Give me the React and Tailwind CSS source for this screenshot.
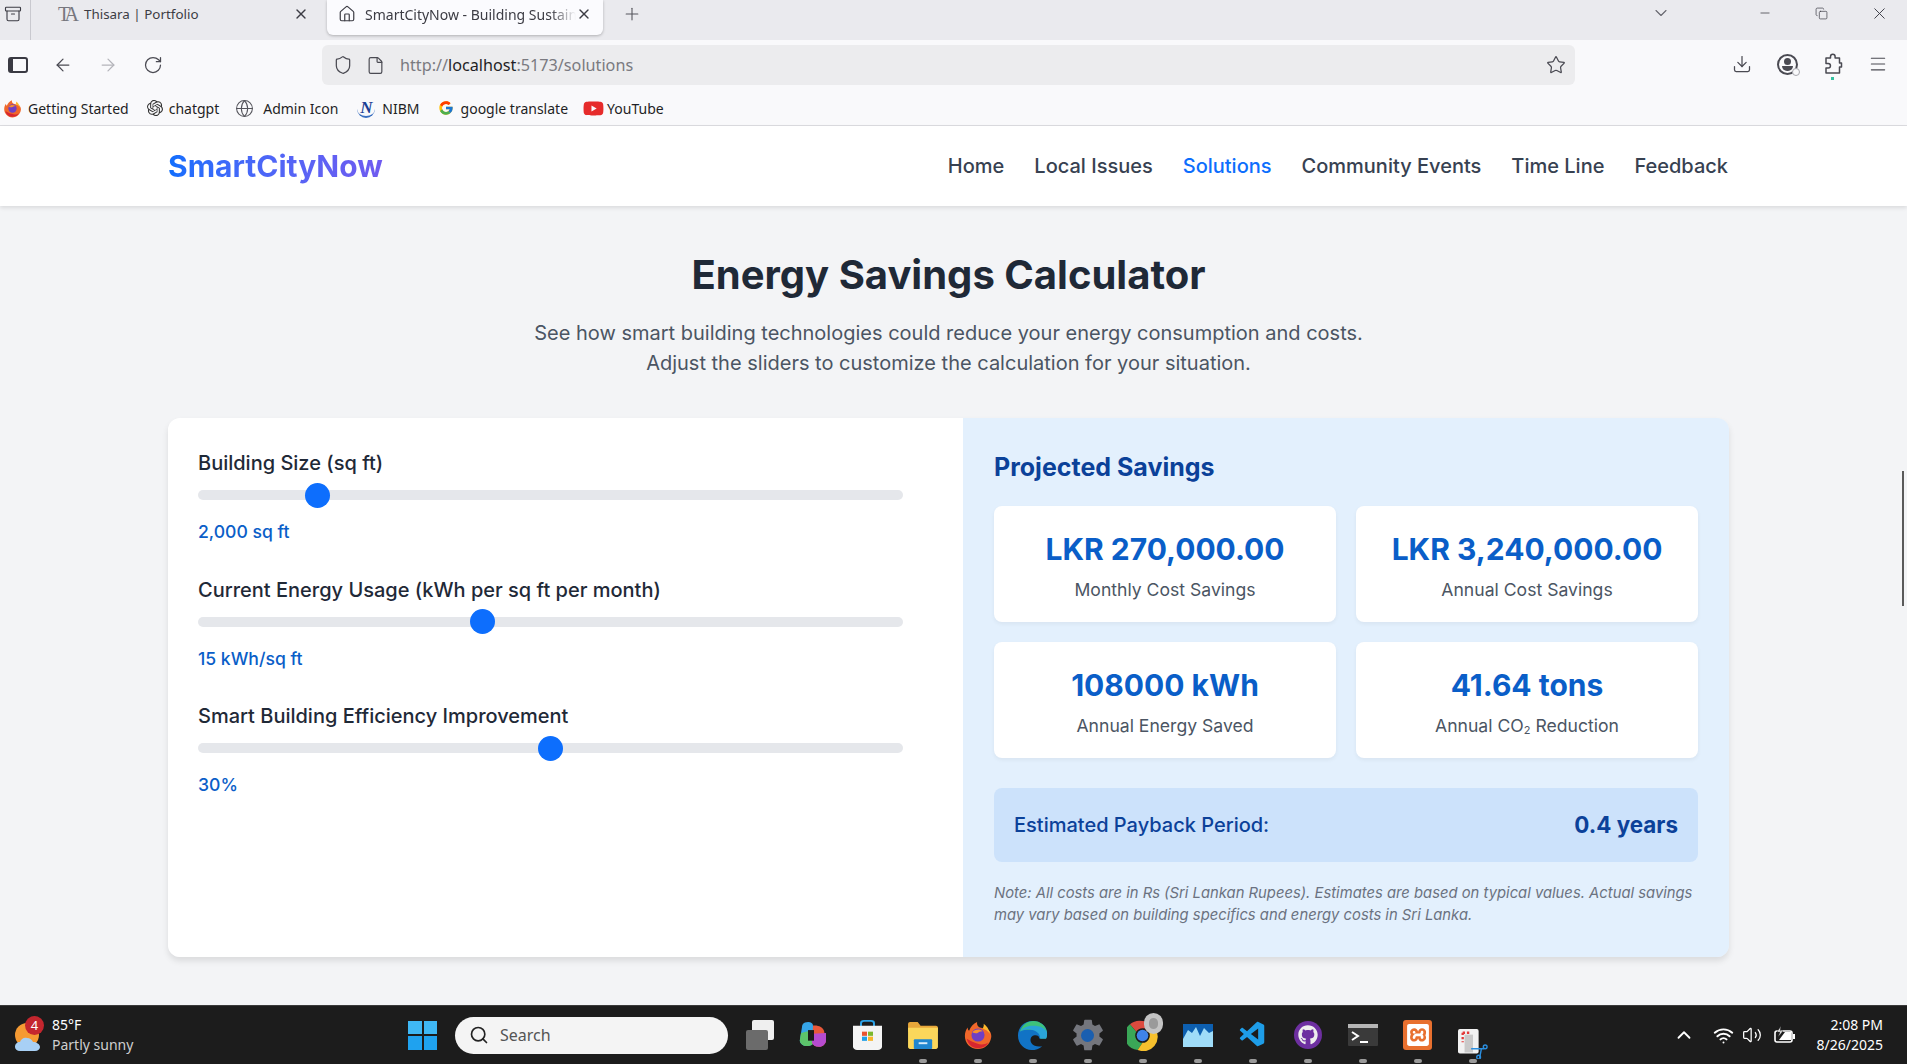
import {
  Archive, ArrowLeft, ArrowRight, ChevronDown, ChevronUp, Copy, Download, File, Globe, House, Menu, Minus, Plus,
  RotateCw, Search, Shield, Star, Volume2, Wifi, X,
} from "lucide-react";
import { FcGoogle } from "react-icons/fc";
import { FaGithub, FaYoutube } from "react-icons/fa";
import { IoSettingsSharp } from "react-icons/io5";
import { SiOpenai, SiXampp } from "react-icons/si";
import { VscVscode } from "react-icons/vsc";

const navLinks = ["Home", "Local Issues", "Solutions", "Community Events", "Time Line", "Feedback"];

const sliders = [
  { label: "Building Size (sq ft)", min: 500, max: 10000, value: 2000, text: "2,000 sq ft" },
  { label: "Current Energy Usage (kWh per sq ft per month)", min: 5, max: 30, value: 15, text: "15 kWh/sq ft" },
  { label: "Smart Building Efficiency Improvement", min: 10, max: 50, value: 30, text: "30%" },
];

function FirefoxIcon({ size = 20 }) {
  return (
    <svg width={size} height={size} viewBox="0 0 32 32">
      <path d="M16 31C7.500 31 2 24.500 2 17c0-4 1.500-7 3-9 0 2 .7 3 1.500 3.500C8 7 11 4 15 2c-.5 3 1 5 3 6 5 1 9 2 10.500 4 1.500 2 2 5 1.500 7-1 7-7 12-14 12z" fill="#f0672a" />
      <path d="M22 4c3 2 6 6 7 11-2-3-5-5-8-6 1-2 1.500-3 1-5z" fill="#fdb82c" />
      <path d="M4 20c1 6 6 10 12 10 5 0 9-2 11-6-3 2-8 3-12 1-4-1-7-3-11-5z" fill="#d8262f" />
      <circle cx="16" cy="16" r="7" fill="#6f3fc4" />
      <path d="M10 13c2-3 8-4 11-1-3 0-4 1-6 2-2 0-4 0-5-1z" fill="#f7912e" />
    </svg>
  );
}

function ChromeIcon() {
  return (
    <span className="relative flex">
      <svg width="31" height="31" viewBox="0 0 32 32">
        <path d="M16 1a15 15 0 0 1 13 7.500H16a7.500 7.500 0 0 0-6.500 3.750L3 4.500A15 15 0 0 1 16 1z" fill="#dd4b3e" />
        <path d="M3 4.500l6.500 7.750A7.500 7.500 0 0 0 16 23.500L11 31A15 15 0 0 1 3 4.500z" fill="#3aa757" />
        <path d="M29 8.500A15 15 0 0 1 11 31l5-7.500a7.500 7.500 0 0 0 6.500-11.250z" fill="#f6c02d" />
        <circle cx="16" cy="16" r="6" fill="#3f83ea" />
      </svg>
      <span className="absolute -top-[7px] right-[-5px] w-[19px] h-[21px] rounded-full bg-[#9a9a9a] border-[5px] border-[#c4c4c4]" />
    </span>
  );
}

function EdgeIcon() {
  return (
    <svg width="31" height="31" viewBox="0 0 32 32">
      <path d="M16 1C7 1 1 8 1 16c0 9 7 15 14 15 4 0 8-1 11-4-4 1-9 0-11-3-2-3-1-7 2-8 3-1 6 0 6 3h7c1-2 1-4 1-6C31 6 24 1 16 1z" fill="#1173c5" />
      <path d="M3 12C5 5 11 1 17 1c7 0 13 5 14 12 0 2 0 4-1 6h-6c1-5-3-9-9-9-5 0-10 0-12 2z" fill="#3ec27a" />
      <path d="M3 12c3-2 7-3 12-2 5 1 9 4 9 9h6c1-2 1-4 1-6-2-5-8-7-14-7-6 0-11 2-14 6z" fill="#2aa4d8" />
    </svg>
  );
}

function CopilotIcon() {
  return (
    <svg width="29" height="28" viewBox="0 0 29 37" preserveAspectRatio="none">
      <path d="M7 2c4-2 8 0 8 4l2 18c0 5-3 9-8 9-5 0-8-5-7-9L4 8c0-3 1-5 3-6z" fill="#35a5e8" />
      <path d="M3 16l12-4 2 12c0 5-3 9-8 9-5 0-8-5-7-9z" fill="#5cc36a" />
      <path d="M15 6c5-1 10 2 11 7l2 12c0 5-3 9-7 9-4 0-6-2-7-6z" fill="#e8583a" />
      <path d="M14 17l14-1 0 9c0 5-3 9-7 9-4 0-6-2-7-6z" fill="#b64bd0" />
      <path d="M10 12l6 0 0 14-6 0z" fill="#1b1b1b" />
    </svg>
  );
}

function StoreIcon() {
  return (
    <svg width="29" height="30" viewBox="0 0 29 36" preserveAspectRatio="none">
      <path d="M8 9V4c0-2 1-3 3-3h7c2 0 3 1 3 3v5" fill="none" stroke="#2ca3e8" strokeWidth="2" />
      <path d="M0 7h29v25c0 2-2 4-4 4H4c-2 0-4-2-4-4z" fill="#f4f4f4" />
      <rect x="9" y="14" width="5" height="5" fill="#e8532f" />
      <rect x="15" y="14" width="5" height="5" fill="#7cb82c" />
      <rect x="9" y="20" width="5" height="5" fill="#1d9fe8" />
      <rect x="15" y="20" width="5" height="5" fill="#f7b52a" />
    </svg>
  );
}

function FolderIcon() {
  return (
    <svg width="30" height="27" viewBox="0 0 31 28">
      <path d="M0 2c0-1 1-2 2-2h8l3 4h16c1 0 2 1 2 2v4H0z" fill="#e8a73a" />
      <path d="M0 6h31v20c0 1-1 2-2 2H2c-1 0-2-1-2-2z" fill="#fbd75b" />
      <rect x="6" y="18" width="19" height="10" rx="1" fill="#1f86d0" />
      <rect x="11" y="21" width="9" height="2" fill="#d8edfb" />
    </svg>
  );
}

function TaskManagerIcon() {
  return (
    <svg width="30" height="23" viewBox="0 0 30 23">
      <rect width="30" height="23" fill="#0d5fb0" />
      <path d="M0 15l5-9 4 3 4-6 4 9 4-8 5 5 4-2v16H0z" fill="#9fdcf8" />
    </svg>
  );
}

function TerminalIcon() {
  return (
    <svg width="30" height="22" viewBox="0 0 30 22">
      <rect width="30" height="22" rx="1" fill="#3a3a3a" />
      <rect width="30" height="4" fill="#b5b5b5" />
      <path d="M4 8l6 4-6 4" fill="none" stroke="#fff" strokeWidth="2" />
      <path d="M12 18h8" stroke="#fff" strokeWidth="2" />
    </svg>
  );
}

function SnipIcon() {
  return (
    <svg width="30" height="30" viewBox="0 0 32 32">
      <rect x="0" y="0" width="22" height="26" rx="2" fill="#f2f2f2" />
      <path d="M5 4h9M5 4v10" stroke="#e33b3b" strokeWidth="2.500" strokeDasharray="2.500 2" />
      <rect x="7" y="6" width="9" height="19" fill="#c9c9c9" />
      <path d="M14 21h14M25 21l-2 10" stroke="#2b8fe0" strokeWidth="1.500" fill="none" />
      <circle cx="29" cy="19" r="2" fill="none" stroke="#2b8fe0" strokeWidth="1.500" />
      <circle cx="22" cy="30" r="2" fill="none" stroke="#2b8fe0" strokeWidth="1.500" />
    </svg>
  );
}

function PuzzleIcon() {
  return (
    <svg width="20" height="22" viewBox="0 0 20 22" fill="none" stroke="currentColor" strokeWidth="1.500" strokeLinejoin="round">
      <path d="M3 5h4.500V3.500a2.300 2.300 0 0 1 4.600 0V5H16.500v5H18.500v4H16.500v6H3v-5h2.200a2 2 0 0 0 0-4.500H3z" />
    </svg>
  );
}

function ProfileIcon() {
  return (
    <span className="relative w-[21px] h-[21px] rounded-full border-2 border-[#4a4a52] flex flex-col items-center pt-[2px]">
      <span className="w-[7px] h-[7px] rounded-full bg-[#4a4a52]" />
      <span className="w-[11px] h-[5px] mt-[1px] rounded-b-full bg-[#4a4a52]" />
      <span className="absolute -bottom-[3px] -right-[4px] w-[8px] h-[8px] rounded-full bg-[#f9f9fb] border border-[#a8a8ae]" />
    </span>
  );
}

function WeatherIcon() {
  return (
    <div className="relative w-[30px] h-[36px] shrink-0">
      <svg width="30" height="36" viewBox="0 0 30 36" className="mt-[2px]">
        <circle cx="13" cy="16" r="12" fill="#f59a33" />
        <path d="M6 32c-3 0-5-2-5-4 0-3 2-5 5-5 1-3 4-5 7-4 3 0 5 2 6 4 3 0 7 2 7 5 0 2-2 4-5 4z" fill="#a8d0f5" />
      </svg>
      <span className="absolute -top-[1px] left-[11px] w-[19px] h-[19px] rounded-full bg-[#c4262e] text-white text-[13px] leading-[19px] text-center">4</span>
    </div>
  );
}

function Bookmark({ icon, label, className }) {
  return (
    <div className={`flex items-center ${className}`}>
      {icon}
      <span className="text-[14px] text-[#1f1f25] whitespace-nowrap">{label}</span>
    </div>
  );
}

function BrowserChrome() {
  return (
    <div className="font-['Noto_Sans',sans-serif] shrink-0">
      <div className="h-10 bg-[#eaeaee] flex items-start text-[#3c3c44]">
        <div className="w-[31px] h-10 border-r border-[#c9c9cf] flex justify-center pt-[5px] pr-[5px]">
          <Archive size={18} strokeWidth={1.500} />
        </div>
        <div className="w-[265px] ml-[20px] h-[35px] flex items-center pb-[7px] pl-[7px] pr-[7px]">
          <span className="text-[20px] text-[#77777e] font-['Liberation_Serif',serif] w-[26px] tracking-[-4px]">TA</span>
          <span className="text-[13.400px] flex-1">Thisara | Portfolio</span>
          <X size={16} />
        </div>
        <div className="w-[276px] ml-[11px] h-[35px] bg-[#fbfbfe] rounded-b-[6px] shadow-[0_1px_3px_rgba(0,0,0,0.25)] flex items-center pb-[7px] pl-[11px] pr-[11px]">
          <House size={18} strokeWidth={1.600} className="mr-[9px] shrink-0" />
          <span className="text-[14px] flex-1 overflow-hidden whitespace-nowrap [mask-image:linear-gradient(to_right,black_88%,transparent)]">SmartCityNow - Building Sustain</span>
          <X size={16} className="shrink-0" />
        </div>
        <Plus size={20} strokeWidth={1.300} className="ml-[19px] mt-[4px] text-[#55555c]" />
        <div className="flex-1" />
        <ChevronDown size={20} strokeWidth={1.300} className="mt-[3px] text-[#66666e] mr-[87px]" />
        <Minus size={14} strokeWidth={1.300} className="mt-[6px] mr-[43px]" />
        <Copy size={13} strokeWidth={1.300} className="mt-[7px] mr-[42px]" />
        <X size={19} strokeWidth={1.200} className="mt-[4px] mr-[18px]" />
      </div>
      <div className="h-[45px] bg-[#f9f9fb] flex items-start pt-[5px] text-[#4a4a52]">
        <div className="w-[322px] h-10 flex items-center shrink-0">
          <div className="w-[20px] h-[16px] ml-[8px] border-2 border-[#3a3a42] rounded-[3px] border-l-[5px]" />
          <ArrowLeft size={20} strokeWidth={1.500} className="ml-[25px]" />
          <ArrowRight size={20} strokeWidth={1.500} className="ml-[25px] text-[#b4b4ba]" />
          <RotateCw size={20} strokeWidth={1.500} className="ml-[25px]" />
        </div>
        <div className="w-[1253px] h-10 bg-[#ececee] rounded-[6px] flex items-center pl-[11px] pr-[9px] shrink-0">
          <Shield size={20} strokeWidth={1.500} />
          <File size={19} strokeWidth={1.500} className="ml-[13px]" />
          <span className="ml-[15px] mt-[1px] text-[16.200px] text-[#7a7a80] flex-1">
            http://<span className="text-[#1f1f25]">localhost</span>:5173/solutions
          </span>
          <Star size={20} strokeWidth={1.500} />
        </div>
        <div className="flex items-center h-10">
          <Download size={20} strokeWidth={1.500} className="ml-[157px] mt-[-2px]" />
          <span className="ml-[25px] mt-[-2px]"><ProfileIcon /></span>
          <span className="relative ml-[25px] mt-[-2px]">
            <PuzzleIcon />
            <span className="absolute -bottom-[5px] left-[8px] w-[3px] h-[3px] bg-[#35c0a0]" />
          </span>
          <Menu size={20} strokeWidth={1.300} className="ml-[25px] mt-[-2px]" />
        </div>
      </div>
      <div className="h-[41px] bg-[#f9f9fb] border-b border-[#dcdce0] flex items-center pt-[6px]">
        <Bookmark className="ml-[3px]" icon={<span className="mr-[6px] flex"><FirefoxIcon size={19} /></span>} label="Getting Started" />
        <Bookmark className="ml-[18px]" icon={<SiOpenai size={16} className="mr-[6px] text-[#333]" />} label="chatgpt" />
        <Bookmark className="ml-[16px]" icon={<Globe size={19} strokeWidth={1.300} className="mr-[9px] text-[#55555c]" />} label="Admin Icon" />
        <Bookmark className="ml-[19px]" icon={<span className="w-[18px] mr-[7px] text-center text-[17px] leading-[17px] font-bold italic text-[#1c3f94] font-['Liberation_Serif',serif] border-b-2 border-[#3a6fc0] rounded-b-full">N</span>} label="NIBM" />
        <Bookmark className="ml-[18px]" icon={<FcGoogle size={16} className="mr-[7px]" />} label="google translate" />
        <Bookmark className="ml-[15px]" icon={<FaYoutube size={21} className="mr-[3px] text-[#e62b2b]" />} label="YouTube" />
      </div>
    </div>
  );
}

function SliderField({ label, min, max, value, text }) {
  return (
    <div className="mb-[30.500px]">
      <label className="block text-[20px] leading-[28px] font-medium text-[#1f2937] mb-[13px]">{label}</label>
      <input
        type="range"
        min={min}
        max={max}
        defaultValue={value}
        className="block w-full h-2.5 appearance-none rounded-[5px] bg-[#e5e7eb] [&::-webkit-slider-thumb]:appearance-none [&::-webkit-slider-thumb]:w-[25px] [&::-webkit-slider-thumb]:h-[25px] [&::-webkit-slider-thumb]:rounded-full [&::-webkit-slider-thumb]:bg-[#0d6efd]"
      />
      <div className="mt-[19px] text-[17.600px] leading-[26px] font-medium text-[#0a5ec8]">{text}</div>
    </div>
  );
}

function StatCard({ value, children }) {
  return (
    <div className="bg-white rounded-[8px] shadow-[0_2px_4px_rgba(0,0,0,0.05)] h-[116px] flex flex-col items-center justify-center">
      <div className="text-[30px] leading-[46px] font-bold text-[#0a5ec8]">{value}</div>
      <div className="text-[17.600px] leading-[26px] mt-[5px] text-[#4b5563]">{children}</div>
    </div>
  );
}

function Taskbar() {
  const apps = [
    { el: <CopilotIcon /> },
    { el: <StoreIcon /> },
    { el: <FolderIcon />, open: true },
    { el: <FirefoxIcon size={30} />, open: true },
    { el: <EdgeIcon />, open: true },
    {
      el: (
        <span className="relative flex items-center justify-center">
          <IoSettingsSharp size={34} className="text-[#74767d]" />
          <span className="absolute w-[13px] h-[13px] rounded-full bg-[#1a5fb0]" />
        </span>
      ),
      open: true,
    },
    { el: <ChromeIcon />, open: true },
    { el: <TaskManagerIcon />, open: true },
    { el: <VscVscode size={30} className="text-[#1e9de8]" />, open: true },
    { el: <span className="w-[28px] h-[28px] rounded-full bg-[#6d2fa0] flex items-center justify-center"><FaGithub size={20} className="text-[#eee]" /></span>, open: true },
    { el: <TerminalIcon />, open: true },
    { el: <span className="w-[29px] h-[30px] rounded-[3px] bg-[#e8702f] flex items-center justify-center"><SiXampp size={22} className="text-white" /></span>, open: true },
    { el: <span className="flex mt-[18px]"><SnipIcon /></span>, open: true },
  ];
  return (
    <div className="h-[59px] shrink-0 bg-[#1c1c1c] border-t border-[#3a3a3a] flex items-center font-['Noto_Sans',sans-serif] text-white">
      <div className="w-[408px] shrink-0 pl-[14px] flex items-center">
        <WeatherIcon />
        <div className="ml-[8px] text-[14px] leading-[20px]">
          <div>85°F</div>
          <div className="text-[#cfcfcf]">Partly sunny</div>
        </div>
      </div>
      <div className="w-[29px] h-[29px] grid grid-cols-2 gap-[2px] shrink-0">
        <span className="bg-[#3fb8f5]" />
        <span className="bg-[#3fb8f5]" />
        <span className="bg-[#1fa2ef]" />
        <span className="bg-[#1fa2ef]" />
      </div>
      <div className="ml-[18px] w-[273px] h-[37px] rounded-full bg-[#f4f4f4] flex items-center pl-[14px] shrink-0">
        <Search size={20} strokeWidth={2} className="text-[#222]" />
        <span className="ml-[11px] text-[16px] text-[#555]">Search</span>
      </div>
      <div className="ml-[18px] w-[28px] h-[30px] relative shrink-0">
        <span className="absolute top-[0px] right-0 w-[22px] h-[20px] rounded-[2px] bg-[#efefef]" />
        <span className="absolute bottom-[0px] left-0 w-[22px] h-[20px] rounded-[2px] bg-[#6b6b6b]" />
      </div>
      <div className="ml-[11px] flex items-center shrink-0">
        {apps.map((app, i) => (
          <div key={i} className="relative w-[55px] h-[44px] flex items-center justify-center">
            {app.el}
            {app.open && <span className="absolute bottom-[-6px] left-[24px] w-[8px] h-[4px] rounded-full bg-[#9a9a9a]" />}
          </div>
        ))}
      </div>
      <div className="flex-1" />
      <div className="flex items-center mr-[24px]">
        <ChevronUp size={22} strokeWidth={2} />
        <Wifi size={21} strokeWidth={2.200} className="ml-[18px]" />
        <Volume2 size={20} strokeWidth={1.500} className="ml-[8px]" />
        <svg width="22" height="18" viewBox="0 0 22 18" className="ml-[12px]">
          <rect x="1" y="5" width="17" height="11" rx="2" fill="none" stroke="#fff" strokeWidth="1.600" />
          <path d="M5 14l6-8h6v8z" fill="#fff" />
          <rect x="19" y="8" width="2" height="5" fill="#fff" />
          <path d="M7 0L3 6h3l-2 5 5-6H6z" fill="#fff" stroke="#1c1c1c" strokeWidth=".5" />
        </svg>
        <div className="ml-[21px] text-right text-[14px] leading-[20px] whitespace-nowrap">
          <div>2:08 PM</div>
          <div>8/26/2025</div>
        </div>
      </div>
    </div>
  );
}

export default function App() {
  return (
    <div className="h-screen flex flex-col overflow-hidden bg-[#f3f4f6] font-['Inter',sans-serif]">
      <BrowserChrome />
      <nav className="h-[80px] shrink-0 bg-white shadow-[0_2px_4px_rgba(0,0,0,0.1)] flex items-center justify-between pl-[168px] pr-[179px] z-10 relative">
        <span className="text-[30px] font-bold bg-gradient-to-r from-[#0d6efd] to-[#6f5bf0] bg-clip-text text-transparent">SmartCityNow</span>
        <ul className="flex gap-[30px]">
          {navLinks.map((link) => (
            <li key={link} className={`text-[20px] font-medium ${link === "Solutions" ? "text-[#0d6efd]" : "text-[#374151]"}`}>{link}</li>
          ))}
        </ul>
      </nav>
      <main className="flex-1 relative px-[168px] pr-[178px]">
        <span className="absolute top-[265px] right-[3px] w-[2px] h-[135px] bg-[#5a5a5a]" />
        <h1 className="mt-[43px] text-center text-[40px] leading-[52px] font-bold text-[#1f2937]">Energy Savings Calculator</h1>
        <p className="mt-[17px] text-center text-[20px] leading-[30px] text-[#4b5563]">
          See how smart building technologies could reduce your energy consumption and costs.
          <br />
          Adjust the sliders to customize the calculation for your situation.
        </p>
        <section className="mt-[40px] flex h-[539px] rounded-[12px] overflow-hidden shadow-[0_4px_6px_rgba(0,0,0,0.1)]">
          <div className="w-[795px] bg-white pl-[30px] pr-[60px] pt-[31px] pb-[30px]">
            {sliders.map((s) => (
              <SliderField key={s.label} {...s} />
            ))}
          </div>
          <div className="flex-1 bg-[#e3f0fd] px-[31px] pt-[32px] pb-[30px]">
            <h2 className="text-[25px] leading-[34px] font-bold text-[#0b4199] mb-[22px]">Projected Savings</h2>
            <div className="grid grid-cols-2 gap-[20px]">
              <StatCard value="LKR 270,000.00">Monthly Cost Savings</StatCard>
              <StatCard value="LKR 3,240,000.00">Annual Cost Savings</StatCard>
              <StatCard value="108000 kWh">Annual Energy Saved</StatCard>
              <StatCard value="41.64 tons">
                Annual CO<sub className="text-[11px]">2</sub> Reduction
              </StatCard>
            </div>
            <div className="mt-[30px] h-[74px] rounded-[8px] bg-[#cce2fb] flex items-center justify-between px-[20px] text-[#0b4199]">
              <span className="text-[20px] font-medium">Estimated Payback Period:</span>
              <span className="text-[22.400px] font-bold">0.4 years</span>
            </div>
            <p className="mt-[20px] text-[14.800px] leading-[22px] italic text-[#6b7280]">
              Note: All costs are in Rs (Sri Lankan Rupees). Estimates are based on typical values. Actual savings may vary based on building specifics and energy costs in Sri Lanka.
            </p>
          </div>
        </section>
      </main>
      <Taskbar />
    </div>
  );
}
